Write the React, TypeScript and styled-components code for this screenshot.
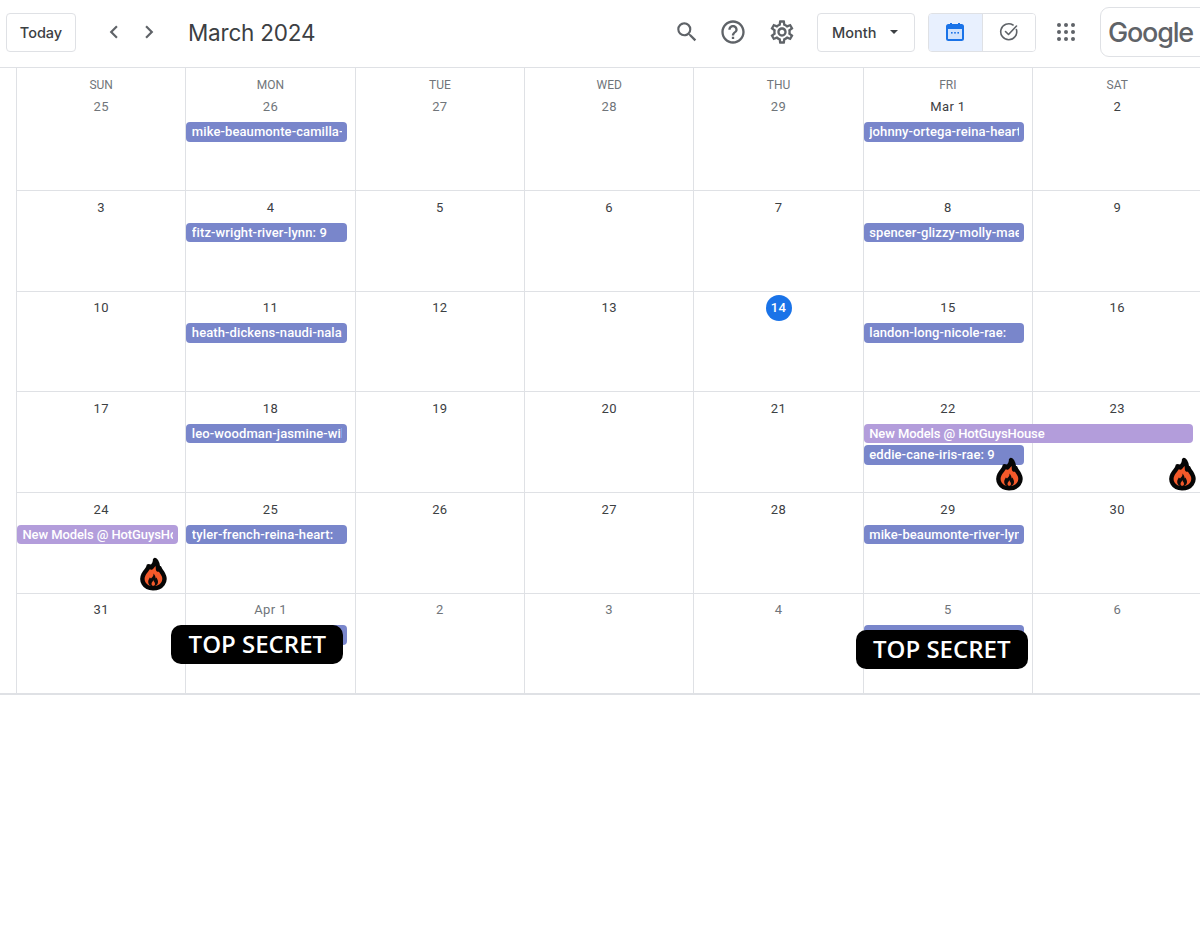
import React from 'react'
import styled, { createGlobalStyle } from 'styled-components'
import { MdChevronLeft, MdChevronRight, MdSearch, MdHelpOutline, MdOutlineSettings } from 'react-icons/md'

const GlobalStyle = createGlobalStyle`
  html, body {
    margin: 0;
    padding: 0;
    background: #fff;
    overflow: hidden;
    font-family: Roboto, "Liberation Sans", sans-serif;
  }
`

type EventItem = { title: string; house?: boolean; span?: boolean }
type Day = {
  date: string
  weekday?: string
  muted?: boolean
  today?: boolean
  events?: EventItem[]
  flame?: { right: number; bottom: number }
  secret?: { left: number; top: number }
}

const chip = (title: string): EventItem => ({ title })

const WEEKS: Day[][] = [
  [
    { weekday: 'SUN', date: '25', muted: true },
    { weekday: 'MON', date: '26', muted: true, events: [chip('mike-beaumonte-camilla-')] },
    { weekday: 'TUE', date: '27', muted: true },
    { weekday: 'WED', date: '28', muted: true },
    { weekday: 'THU', date: '29', muted: true },
    { weekday: 'FRI', date: 'Mar 1', events: [chip('johnny-ortega-reina-heart')] },
    { weekday: 'SAT', date: '2' },
  ],
  [
    { date: '3' },
    { date: '4', events: [chip('fitz-wright-river-lynn: 9')] },
    { date: '5' },
    { date: '6' },
    { date: '7' },
    { date: '8', events: [chip('spencer-glizzy-molly-mae')] },
    { date: '9' },
  ],
  [
    { date: '10' },
    { date: '11', events: [chip('heath-dickens-naudi-nala')] },
    { date: '12' },
    { date: '13' },
    { date: '14', today: true },
    { date: '15', events: [chip('landon-long-nicole-rae:')] },
    { date: '16' },
  ],
  [
    { date: '17' },
    { date: '18', events: [chip('leo-woodman-jasmine-wil')] },
    { date: '19' },
    { date: '20' },
    { date: '21' },
    {
      date: '22',
      events: [{ title: 'New Models @ HotGuysHouse', house: true, span: true }, chip('eddie-cane-iris-rae: 9')],
      flame: { right: 8, bottom: 1 },
    },
    { date: '23', flame: { right: 4, bottom: 1 } },
  ],
  [
    { date: '24', events: [{ title: 'New Models @ HotGuysHo', house: true }], flame: { right: 17, bottom: 2 } },
    { date: '25', events: [chip('tyler-french-reina-heart:')] },
    { date: '26' },
    { date: '27' },
    { date: '28' },
    { date: '29', events: [chip('mike-beaumonte-river-lyn')] },
    { date: '30' },
  ],
  [
    { date: '31' },
    { date: 'Apr 1', muted: true, events: [chip('')], secret: { left: -15, top: 31.5 } },
    { date: '2', muted: true },
    { date: '3', muted: true },
    { date: '4', muted: true },
    { date: '5', muted: true, events: [chip('')], secret: { left: -8, top: 36 } },
    { date: '6', muted: true },
  ],
]

const Flame: React.FC = () => (
  <svg width="30" height="36" viewBox="0 0 30 36">
    <path
      d="M17 5C17.500 8 15.500 10 13.500 12.500C12.800 11.700 12 11.300 10.500 11.300C10.500 14 7.500 15.500 5.500 19.500C2.500 25.500 6 33.300 15 33.300C24.500 33.300 28 26 25.800 20.500C24.500 17 22 15.500 21.500 13C21 13.500 20.300 14 20 14.500C20 10.500 19.500 7 17 5Z"
      fill="#f4592a"
      stroke="#060606"
      strokeWidth="4.400"
      strokeLinejoin="round"
    />
    <path
      d="M15.500 18.500C15.800 21 14.200 22 13 23.500C12.700 23 12.300 22.700 11.800 22.500C11.200 24 10.200 25 10.200 26.800C10.200 29.600 12.400 31.500 15 31.500C17.800 31.500 20 29.500 20 26.800C20 25 19 23.800 18.500 22.500C18.200 22.800 17.900 23.100 17.700 23.600C17.600 21.800 17 19.900 15.500 18.500Z"
      fill="#0b0b0b"
    />
    <path d="M15.200 25C15.400 26.300 13.400 27.200 13.500 29C13.600 30.200 14.300 30.800 15.200 30.800C16.300 30.800 17 30 17 29C17 27.300 15.700 26.500 15.200 25Z" fill="#f4592a" />
  </svg>
)

const CalendarGlyph: React.FC = () => (
  <svg width="20" height="20" viewBox="0 0 20 20">
    <rect x="2" y="3" width="16" height="15" rx="1.500" fill="#d2e3fc" stroke="#1a73e8" strokeWidth="2" />
    <rect x="2" y="3" width="16" height="4" fill="#1a73e8" />
    <rect x="5" y="1" width="2" height="3" fill="#1a73e8" />
    <rect x="13" y="1" width="2" height="3" fill="#1a73e8" />
    <rect x="6" y="10" width="1.600" height="1.600" fill="#1a73e8" />
    <rect x="9.200" y="10" width="1.600" height="1.600" fill="#1a73e8" />
    <rect x="12.400" y="10" width="1.600" height="1.600" fill="#1a73e8" />
  </svg>
)

const TaskGlyph: React.FC = () => (
  <svg width="20" height="20" viewBox="0 0 20 20" fill="none" stroke="#5f6368" strokeWidth="1.600">
    <path d="M17.400 7.500A8 8 0 1 1 14 3" strokeLinecap="round" />
    <path d="M6.500 9.500l3 3 8-8.500" strokeLinecap="round" strokeLinejoin="round" />
  </svg>
)

const AppsGlyph: React.FC = () => (
  <svg width="18" height="18" viewBox="0 0 18 18" fill="#5f6368">
    {[2, 9, 16].flatMap(cy =>
      [2, 9, 16].map(cx => <circle key={`${cx}-${cy}`} cx={cx} cy={cy} r="2" />)
    )}
  </svg>
)

const DayCell: React.FC<{ day: Day }> = ({ day }) => (
  <Cell>
    {day.weekday && <Weekday>{day.weekday}</Weekday>}
    <DateSlot>
      <DateLabel $muted={day.muted} $today={day.today}>{day.date}</DateLabel>
    </DateSlot>
    <Events>
      {day.events?.map((event, i) => (
        <EventChip key={i} $house={event.house} $span={event.span}>
          <EventText $house={event.house}>{event.title}</EventText>
        </EventChip>
      ))}
    </Events>
    {day.flame && (
      <FlameMark $right={day.flame.right} $bottom={day.flame.bottom}>
        <Flame />
      </FlameMark>
    )}
    {day.secret && (
      <SecretLabel $left={day.secret.left} $top={day.secret.top}>TOP SECRET</SecretLabel>
    )}
  </Cell>
)

export default function App() {
  return (
    <>
      <GlobalStyle />
      <Page>
        <Toolbar>
          <TodayButton>Today</TodayButton>
          <NavGroup>
            <MdChevronLeft size={26} />
            <MdChevronRight size={26} />
          </NavGroup>
          <Title>March 2024</Title>
          <Spacer />
          <IconGroup>
            <SearchIcon size={26} />
            <MdHelpOutline size={28} />
            <MdOutlineSettings size={28} />
          </IconGroup>
          <ViewSelect>
            Month
            <Caret />
          </ViewSelect>
          <ModeToggle>
            <ModeOption $active><CalendarGlyph /></ModeOption>
            <ModeOption><TaskGlyph /></ModeOption>
          </ModeToggle>
          <AppsButton><AppsGlyph /></AppsButton>
          <LogoBox>Google</LogoBox>
        </Toolbar>
        <Month>
          {WEEKS.map((week, i) => (
            <Week key={i} $first={i === 0}>
              {week.map(day => <DayCell key={day.date} day={day} />)}
            </Week>
          ))}
        </Month>
      </Page>
    </>
  )
}

const Page = styled.div`
  width: 1200px;
  height: 927px;
  overflow: hidden;
  background: #fff;
`

const Toolbar = styled.header`
  height: 68px;
  box-sizing: border-box;
  display: flex;
  align-items: center;
  padding: 0 0 3px 6px;
  border-bottom: 1px solid #dfe1e5;
  color: #3c4043;
`

const TodayButton = styled.button`
  width: 70px;
  height: 39px;
  padding: 0;
  background: #fff;
  border: 1px solid #dfe1e5;
  border-radius: 4px;
  font: 500 14.5px Inter, Roboto, sans-serif;
  color: #3c4043;
`

const NavGroup = styled.div`
  display: flex;
  gap: 9px;
  margin-left: 25px;
  color: #5f6368;
`

const Title = styled.h1`
  margin: 0 0 0 26px;
  font: 400 22.5px Inter, Roboto, sans-serif;
  letter-spacing: -0.2px;
  color: #3c4043;
`

const Spacer = styled.div`
  flex: 1;
`

const IconGroup = styled.div`
  display: flex;
  align-items: center;
  gap: 21px;
  color: #5f6368;
`

const SearchIcon = styled(MdSearch)`
  margin-right: -2px;
`

const ViewSelect = styled.div`
  width: 98px;
  height: 39px;
  box-sizing: border-box;
  margin-left: 21px;
  padding-left: 14px;
  display: flex;
  align-items: center;
  border: 1px solid #dfe1e5;
  border-radius: 4px;
  font: 500 14.5px Inter, Roboto, sans-serif;
  color: #3c4043;
`

const Caret = styled.span`
  margin-left: 14px;
  border-left: 4px solid transparent;
  border-right: 4px solid transparent;
  border-top: 4px solid #3c4043;
`

const ModeToggle = styled.div`
  display: flex;
  width: 108px;
  height: 39px;
  box-sizing: border-box;
  margin-left: 13px;
  border: 1px solid #dfe1e5;
  border-radius: 4px;
  overflow: hidden;
`

const ModeOption = styled.div<{ $active?: boolean }>`
  flex: 1;
  display: flex;
  align-items: center;
  justify-content: center;
  background: ${p => (p.$active ? '#e8f0fe' : '#fff')};
  border-right: ${p => (p.$active ? '1px solid #dfe1e5' : '0')};
`

const AppsButton = styled.div`
  display: flex;
  margin-left: 21px;
`

const LogoBox = styled.div`
  width: 110px;
  height: 50px;
  box-sizing: border-box;
  flex-shrink: 0;
  margin-left: 25px;
  margin-right: -10px;
  padding-left: 7px;
  display: flex;
  align-items: center;
  border: 1px solid #dfe1e5;
  border-radius: 9px;
  font: 500 27px Inter, Roboto, sans-serif;
  letter-spacing: -1.2px;
  color: #5f6368;
`

const Month = styled.main`
  padding-left: 16px;
  border-bottom: 2px solid #dfe1e5;
`

const Week = styled.section<{ $first: boolean }>`
  display: grid;
  grid-template-columns: repeat(7, 169.35px);
  height: ${p => (p.$first ? '122px' : '100.7px')};
  box-sizing: border-box;
  border-top: ${p => (p.$first ? '0' : '1px solid #dfe1e5')};
`

const Cell = styled.div`
  position: relative;
  min-width: 0;
  display: flex;
  flex-direction: column;
  border-left: 1px solid #dfe1e5;
  padding-top: 3.5px;
`

const Weekday = styled.div`
  margin-top: 6.5px;
  height: 16px;
  line-height: 15px;
  text-align: center;
  font-size: 12px;
  font-weight: 400;
  color: #70757a;
`

const DateSlot = styled.div`
  height: 26px;
  margin-bottom: 2px;
  display: flex;
  justify-content: center;
`

const DateLabel = styled.span<{ $muted?: boolean; $today?: boolean }>`
  min-width: 26px;
  height: 26px;
  line-height: 26px;
  border-radius: 13px;
  text-align: center;
  font-size: 13px;
  font-weight: ${p => (p.$today ? 500 : 400)};
  letter-spacing: 0.4px;
  color: ${p => (p.$today ? '#fff' : p.$muted ? '#70757a' : '#3c4043')};
  background: ${p => (p.$today ? '#1a73e8' : 'transparent')};
`

const Events = styled.div`
  display: flex;
  flex-direction: column;
  gap: 2px;
`

const EventChip = styled.div<{ $house?: boolean; $span?: boolean }>`
  position: relative;
  z-index: 1;
  width: ${p => (p.$span ? '329.5px' : '160.5px')};
  height: 19.5px;
  box-sizing: border-box;
  padding: 0 5px 0 5.5px;
  border-radius: 4px;
  background: ${p => (p.$house ? '#b39ddb' : '#7986cb')};
`

const EventText = styled.div<{ $house?: boolean }>`
  overflow: hidden;
  white-space: nowrap;
  line-height: 19px;
  font-size: 13px;
  font-weight: 500;
  letter-spacing: ${p => (p.$house ? '-0.1px' : '0.1px')};
  color: #fff;
`

const FlameMark = styled.div<{ $right: number; $bottom: number }>`
  position: absolute;
  z-index: 2;
  display: flex;
  right: ${p => p.$right}px;
  bottom: ${p => p.$bottom}px;
`

const SecretLabel = styled.div<{ $left: number; $top: number }>`
  position: absolute;
  z-index: 3;
  left: ${p => p.$left}px;
  top: ${p => p.$top}px;
  width: 172px;
  height: 39px;
  text-align: center;
  border-radius: 10px;
  background: #000;
  color: #fff;
  font: 600 24px/38px "Open Sans", Inter, sans-serif;
`
